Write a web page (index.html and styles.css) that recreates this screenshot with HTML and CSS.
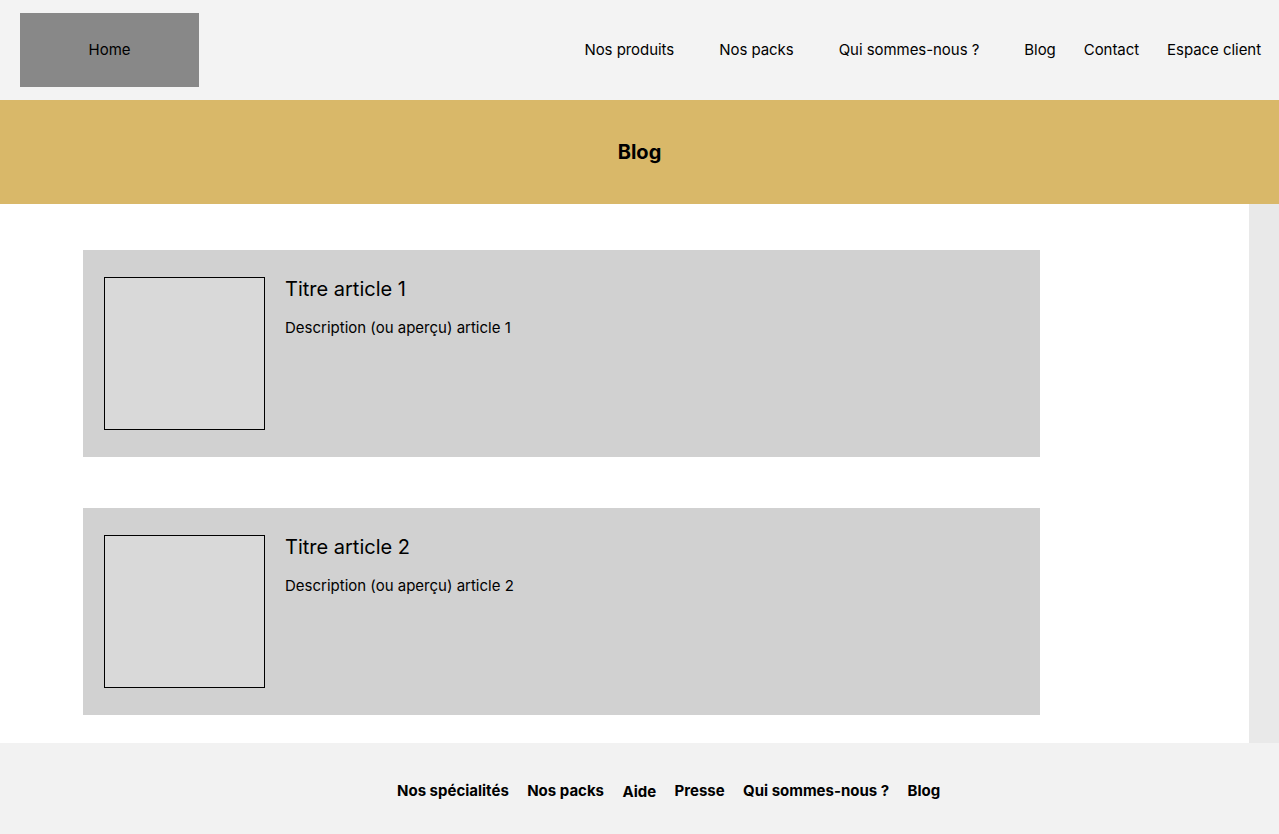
FILE: index.html
```html
<!DOCTYPE html>
<html lang="fr">
<head>
<meta charset="utf-8">
<title>Blog</title>
<link rel="stylesheet" href="styles.css">
</head>
<body>
<header class="topbar">
  <a class="home" href="#">Home</a>
  <nav class="nav">
    <a class="nav-link wide" href="#">Nos produits</a>
    <a class="nav-link wide" href="#">Nos packs</a>
    <a class="nav-link wide" href="#">Qui sommes-nous ?</a>
    <a class="nav-link" href="#">Blog</a>
    <a class="nav-link" href="#">Contact</a>
    <a class="nav-link last" href="#">Espace client</a>
  </nav>
</header>
<section class="banner"><h1>Blog</h1></section>
<div class="content">
  <main class="articles">
    <article class="card">
      <div class="thumb"></div>
      <div class="card-text">
        <h2>Titre article 1</h2>
        <p>Description (ou aperçu) article 1</p>
      </div>
    </article>
    <article class="card">
      <div class="thumb"></div>
      <div class="card-text">
        <h2>Titre article 2</h2>
        <p>Description (ou aperçu) article 2</p>
      </div>
    </article>
  </main>
  <aside class="sidebar"></aside>
</div>
<footer class="footer">
  <a href="#">Nos spécialités</a>
  <a href="#">Nos packs</a>
  <a href="#" class="low">Aide</a>
  <a href="#">Presse</a>
  <a href="#">Qui sommes-nous ?</a>
  <a href="#">Blog</a>
</footer>
</body>
</html>
```
FILE: styles.css
```css
* { box-sizing: border-box; }
html, body { margin: 0; padding: 0; }
body {
  font-family: Inter, "Liberation Sans", sans-serif;
  color: #000;
  background: #fff;
  width: 1279px;
}
a { color: #000; text-decoration: none; }

.topbar {
  height: 100px;
  background: #f3f3f3;
  display: flex;
  align-items: center;
  justify-content: space-between;
  padding-left: 20px;
  padding-right: 18px;
}
.home {
  width: 179px;
  height: 74px;
  background: #888888;
  display: flex;
  align-items: center;
  justify-content: center;
  font-size: 15px;
  margin-top: -1px;
}
.nav { display: flex; align-items: center; margin-top: -2px; }
.nav-link { font-size: 15px; margin-right: 28px; letter-spacing: -0.05px; }
.nav-link.wide { margin-right: 45px; }
.nav-link.last { margin-right: 0; }

.banner {
  height: 104px;
  background: #d9b869;
  display: flex;
  align-items: center;
  justify-content: center;
}
.banner h1 { margin: 0; font-size: 20px; font-weight: 700; }

.content { display: flex; }
.articles {
  flex: 1;
  padding: 46px 0 28px 83px;
  display: flex;
  flex-direction: column;
  gap: 51px;
}
.sidebar { width: 30px; background: #e9e9e9; }

.card {
  width: 957px;
  height: 207px;
  background: #d1d1d1;
  display: flex;
  padding: 27px 21px;
  gap: 20px;
}
.thumb {
  width: 161px;
  height: 153px;
  background: #d9d9d9;
  border: 1px solid #000;
  flex: none;
}
.card-text h2 {
  margin: 0;
  font-size: 20px;
  font-weight: 400;
  line-height: 24px;
}
.card-text p {
  margin: 18px 0 0;
  font-size: 15px;
  line-height: 18px;
}

.footer {
  height: 91px;
  background: #f2f2f2;
  display: flex;
  align-items: center;
  padding-left: 397px;
  padding-top: 3px;
  gap: 18.4px;
}
.footer a { font-size: 15px; font-weight: 700; }
.footer a.low { margin-top: 2px; }
```
